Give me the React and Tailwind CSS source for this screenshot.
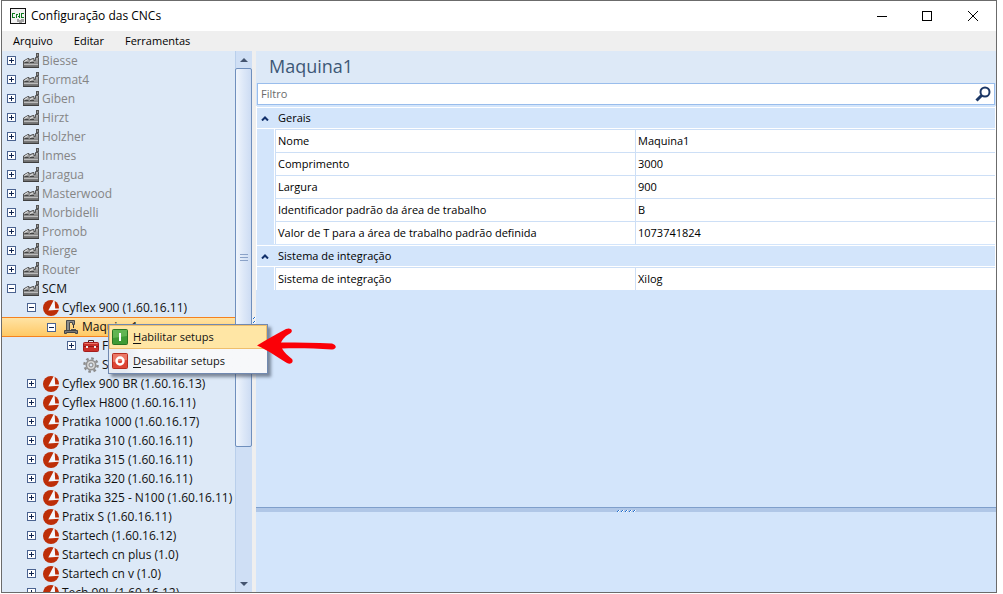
import React, { useState } from 'react';

const factories = ['Biesse', 'Format4', 'Giben', 'Hirzt', 'Holzher', 'Inmes', 'Jaragua', 'Masterwood', 'Morbidelli', 'Promob', 'Rierge', 'Router'];

const scmMachines = [
    'Cyflex 900 BR (1.60.16.13)',
    'Cyflex H800 (1.60.16.11)',
    'Pratika 1000 (1.60.16.17)',
    'Pratika 310 (1.60.16.11)',
    'Pratika 315 (1.60.16.11)',
    'Pratika 320 (1.60.16.11)',
    'Pratika 325 - N100 (1.60.16.11)',
    'Pratix S (1.60.16.11)',
    'Startech (1.60.16.12)',
    'Startech cn plus (1.0)',
    'Startech cn v (1.0)',
    'Tech 99L (1.60.16.12)',
];

const nodes = [
    ...factories.map(label => ({ label, level: 0, icon: 'factory', expander: 'plus', disabled: true })),
    { label: 'SCM', level: 0, icon: 'factory', expander: 'minus' },
    { label: 'Cyflex 900 (1.60.16.11)', level: 1, icon: 'scm', expander: 'minus' },
    { label: 'Maquina1', level: 2, icon: 'machine', expander: 'minus', selected: true },
    { label: 'Ferramentas', level: 3, icon: 'toolbox', expander: 'plus' },
    { label: 'Setups', level: 3, icon: 'gear' },
    ...scmMachines.map(label => ({ label, level: 1, icon: 'scm', expander: 'plus' })),
];

const groups = [
    {
        title: 'Gerais',
        rows: [
            ['Nome', 'Maquina1'],
            ['Comprimento', '3000'],
            ['Largura', '900'],
            ['Identificador padrão da área de trabalho', 'B'],
            ['Valor de T para a área de trabalho padrão definida', '1073741824'],
        ],
    },
    { title: 'Sistema de integração', rows: [['Sistema de integração', 'Xilog']] },
];

const indent = ['pl-[5px]', 'pl-[25px]', 'pl-[45px]', 'pl-[65px]'];

const AppIcon = () => (
    <svg width="16" height="16" viewBox="0 0 16 16" shapeRendering="crispEdges">
        <rect x="0.5" y="0.5" width="15" height="15" fill="#f2f2f2" stroke="#111" />
        <path d="M5 5.5H2.5V9.500H5M6.500 10V5.500M7 6.500H8M8 8.500H9M9.500 10V5M14 5.500H11.500V9.500H14" fill="none" stroke="#0d7a1c" />
        <path d="M7 11h2v1h2v-1h3v3h-2v1h-3v-1h-2z" fill="#a2a2a2" />
    </svg>
);

const FactoryIcon = () => (
    <svg width="16" height="16" viewBox="0 0 16 16">
        <defs>
            <linearGradient id="factory" x1="0" y1="0" x2="0" y2="1">
                <stop offset="0" stopColor="#b5b5b5" />
                <stop offset="1" stopColor="#6a6a6a" />
            </linearGradient>
        </defs>
        <path d="M0.5 14.5V8L5 5.5H6V7L10 5.5H11V7.5H12.5V4.5H15.5V14.5Z" fill="url(#factory)" stroke="#555" />
        <rect x="13.5" y="0.5" width="2" height="3" fill="#999" stroke="#555" />
        <path d="M1.500 9.500H5.500M7 9.500H11" stroke="#444" />
        <path d="M1.500 8.500L5 6.500M7 8.500L10 7" stroke="#e6e6e6" />
        <path d="M1 11.5H15" stroke="#bcbcbc" />
        <path d="M0 14.5H16" stroke="#3f3f3f" />
    </svg>
);

const ScmIcon = () => (
    <svg width="16" height="16" viewBox="0 0 16 16">
        <circle cx="8" cy="8" r="8" fill="#bd2e08" />
        <path d="M10.800 0L5.300 10.600L16 9.800V8.400L12.200 8.600L11.600 0Z" fill="#f4f7fc" />
    </svg>
);

const MachineIcon = () => (
    <svg width="16" height="16" viewBox="0 0 16 16">
        <path d="M3.500 1.500H11.500V5.500H9.500V3.500H6.500V11.500H3.500Z" fill="#8d8d8d" stroke="#4a4a4a" />
        <path d="M10.500 6V9" stroke="#333" />
        <path d="M1.500 14.500V11.500H14.500V14.500H12.500V13.500H3.500V14.500Z" fill="#777" stroke="#444" />
        <path d="M8 10.500H13" stroke="#555" />
    </svg>
);

const ToolboxIcon = () => (
    <svg width="16" height="16" viewBox="0 0 16 16">
        <path d="M5.5 5V2.5H10.5V5" fill="none" stroke="#4a2020" />
        <rect x="0.5" y="4.5" width="15" height="9" rx="1" fill="#c9302a" stroke="#a51d1d" />
        <path d="M1.5 5.5H14.5" stroke="#ea7468" />
        <path d="M1 8.5H15" stroke="#8c1717" />
        <rect x="3" y="8" width="2" height="2" fill="#eee" />
        <rect x="11" y="8" width="2" height="2" fill="#eee" />
    </svg>
);

const GearIcon = () => (
    <svg width="16" height="16" viewBox="0 0 16 16" fill="none">
        <circle cx="8" cy="8" r="6.6" stroke="#8c8c8c" strokeWidth="2.4" strokeDasharray="2.6 2.58" />
        <circle cx="8" cy="8" r="4.7" fill="#d6d6d6" stroke="#929292" strokeWidth="1.6" />
        <circle cx="8" cy="8" r="2" fill="#dde9f7" stroke="#858585" />
    </svg>
);

const icons = { factory: FactoryIcon, scm: ScmIcon, machine: MachineIcon, toolbox: ToolboxIcon, gear: GearIcon };

const Expander = ({ open, label }) => (
    <button aria-label={open ? `Recolher ${label}` : `Expandir ${label}`} className="block w-[9px] h-[9px]">
        <svg width="9" height="9" viewBox="0 0 9 9" shapeRendering="crispEdges">
            <rect x="0.5" y="0.5" width="8" height="8" fill="#fff" stroke="#4b6390" />
            <path d={open ? 'M2 4.5H7' : 'M2 4.5H7M4.5 2V7'} stroke="#10244f" />
        </svg>
    </button>
);

const TreeNode = ({ node }) => {
    const Icon = icons[node.icon];
    return (
        <li className={`flex items-center h-[19px] shrink-0 whitespace-nowrap ${indent[node.level]} ${node.selected ? 'bg-linear-to-b from-[#ffe3a3] to-[#ffc964] border-t border-[#f5821f] shadow-[0_1px_0_#f5821f]' : ''} ${node.disabled ? 'text-[#858585]' : 'text-[#111]'}`}>
            <span className="w-4 shrink-0">
                {node.expander && <Expander open={node.expander === 'minus'} label={node.label} />}
            </span>
            <Icon />
            <span className="pl-[3px]">{node.label}</span>
        </li>
    );
};

const ScrollBar = () => (
    <div className="w-[17px] shrink-0 flex flex-col bg-[#cfdff5] border-l border-[#b9cfeb]">
        <button aria-label="Rolar para cima" className="h-[17px] flex items-center justify-center">
            <svg width="8" height="4" viewBox="0 0 8 4"><path d="M0 4L4 0L8 4Z" fill="#44546f" /></svg>
        </button>
        <div className="basis-[379px] shrink -ml-px rounded-xs border border-[#6f8fbd] bg-linear-to-r from-[#f0f5fc] via-[#dde8f8] to-[#cddcf3] flex items-center justify-center">
            <span className="w-2 h-[7px] border-y border-[#8aa2c8] flex items-center">
                <span className="w-full h-px bg-[#8aa2c8]" />
            </span>
        </div>
        <div className="flex-1" />
        <button aria-label="Rolar para baixo" className="h-[17px] flex items-center justify-center">
            <svg width="8" height="4" viewBox="0 0 8 4"><path d="M0 0H8L4 4Z" fill="#44546f" /></svg>
        </button>
    </div>
);

const Grip = ({ vertical }) => (
    <svg
        width={vertical ? 3 : 19}
        height={vertical ? 11 : 3}
        viewBox={vertical ? '0 0 3 11' : '0 0 19 3'}
        shapeRendering="crispEdges"
    >
        {(vertical ? [0, 1, 2] : [0, 1, 2, 3, 4]).map(i => (
            <g key={i} transform={vertical ? `translate(0 ${i * 4})` : `translate(${i * 4} 0)`}>
                <path d="M0 2h1v1H0zM1 1h1v1H1z" fill="#1f6fd0" />
                <path d="M1 2h1v1H1zM2 1h1v1H2z" fill="#fff" />
            </g>
        ))}
    </svg>
);

const ContextMenu = () => (
    <div role="menu" className="absolute left-[106px] top-[273px] w-[160px] h-[50px] border border-[#7189b0] bg-linear-to-r from-[#e6ebf2] from-10% to-[#f7f8fa] to-20% shadow-[3px_3px_3px_rgba(60,70,90,0.6)] text-[11px] text-[#111]">
        <button role="menuitem" className="w-full h-6 flex items-center pl-[2px] border border-[#efbf6c] bg-[#ffe6a5]">
            <svg width="16" height="16" viewBox="0 0 16 16">
                <rect x="0.5" y="0.5" width="15" height="15" rx="1" fill="#3f9b35" stroke="#2a7422" />
                <path d="M1 1H15V7L1 9Z" fill="#62b552" />
                <rect x="7" y="4" width="2" height="8" fill="#fff" />
            </svg>
            <span className="pl-[5px]"><u className="underline-offset-2">H</u>abilitar setups</span>
        </button>
        <button role="menuitem" className="w-full h-6 flex items-center pl-[3px]">
            <svg width="16" height="16" viewBox="0 0 16 16">
                <rect x="0.5" y="0.5" width="15" height="15" rx="1" fill="#dd4434" stroke="#b52c20" />
                <path d="M1 1H15V7L1 9Z" fill="#ec7867" />
                <circle cx="8" cy="8" r="3.5" fill="none" stroke="#fff" strokeWidth="2.4" />
            </svg>
            <span className="pl-[5px]"><u className="underline-offset-2">D</u>esabilitar setups</span>
        </button>
    </div>
);

const Arrow = () => (
    <svg className="absolute left-[255px] top-[276px]" width="80" height="38" viewBox="0 0 80 38">
        <path d="M0 18.5C10 12 20 7 29 2C34 0 37 4 33 6.500C28 9 26 12 24 15.500C42 15.500 59 15.500 75 16.500C80 18 80 22 75 22.500C58 21.500 42 21 25 21.500C27 25 31 29 35 32C37 35 34 38 30 36C20 30 12 24 0 18.500Z" fill="#fb0007" />
    </svg>
);

const PropertyGroup = ({ group }) => {
    const [open, setOpen] = useState(true);
    return (
        <tbody>
            <tr className="h-[23px]">
                <th colSpan={3} className="p-0 font-normal text-left border-t border-[#d3e5fb]">
                    <button onClick={() => setOpen(!open)} className="w-full h-[22px] flex items-center border-y border-white">
                        <span className="w-[21px] pl-1">
                            <svg className={open ? '' : 'rotate-180'} width="8" height="5" viewBox="0 0 8 5">
                                <path d="M1 4.500L4 1.500L7 4.500" fill="none" stroke="#12306b" strokeWidth="2" />
                            </svg>
                        </span>
                        {group.title}
                    </button>
                </th>
            </tr>
            {open && group.rows.map(([name, value]) => (
                <tr key={name} className="h-[23px]">
                    <td className="p-0 border-r border-white" />
                    <th scope="row" className="py-0 pl-[2px] font-normal text-left bg-white border-t border-l border-[#cddff6]">{name}</th>
                    <td className="py-0 pl-[2px] bg-white border-t border-l border-[#cddff6]">{value}</td>
                </tr>
            ))}
        </tbody>
    );
};

const App = () => {
    const [filter, setFilter] = useState('');

    return (
        <div className="h-screen pl-px pr-1.5 pb-px bg-white font-['Open_Sans',sans-serif] text-[12px] leading-4 text-black">
            <div className="h-full flex flex-col overflow-hidden border border-[#6b6b6b] bg-[#efefef]">
                <header className="h-[30px] shrink-0 flex items-center bg-white pl-2">
                    <AppIcon />
                    <h1 className="pl-[5px] flex-1 text-[12px]">Configuração das CNCs</h1>
                    <button aria-label="Minimizar" className="w-[45px] flex justify-center">
                        <svg width="10" height="10" viewBox="0 0 10 10"><path d="M0 5.500H10" stroke="#000" /></svg>
                    </button>
                    <button aria-label="Maximizar" className="w-[45px] flex justify-center">
                        <svg width="10" height="10" viewBox="0 0 10 10"><rect x="0.5" y="0.5" width="9" height="9" fill="none" stroke="#000" /></svg>
                    </button>
                    <button aria-label="Fechar" className="w-[47px] flex justify-center">
                        <svg width="10" height="10" viewBox="0 0 10 10"><path d="M0 0L10 10M10 0L0 10" stroke="#000" /></svg>
                    </button>
                </header>

                <nav className="h-5 shrink-0 flex items-center gap-[21px] pl-[11px] text-[11px]">
                    <button>Arquivo</button>
                    <button>Editar</button>
                    <button>Ferramentas</button>
                </nav>

                <div className="relative flex-1 min-h-0 flex">
                    <aside className="w-[250px] shrink-0 flex bg-[#dde9f7]">
                        <ul className="flex-1 min-w-0 overflow-hidden">
                            {nodes.map(node => <TreeNode key={node.label} node={node} />)}
                        </ul>
                        <ScrollBar />
                    </aside>
                    <div className="w-1 shrink-0 flex items-center justify-center">
                        <Grip vertical />
                    </div>

                    <main className="flex-1 min-w-0 flex flex-col bg-[#d3e5fb]">
                        <h2 className="h-8 shrink-0 pl-[13px] pb-0.5 flex items-center bg-[#dde9f7] text-[18px] text-[#3d5876]">Maquina1</h2>
                        <div className="mx-px h-[22px] shrink-0 flex items-center bg-white border border-[#99bdec] pl-[3px] pr-[3px]">
                            <input
                                aria-label="Filtro"
                                placeholder="Filtro"
                                value={filter}
                                onChange={(e) => setFilter(e.target.value)}
                                className="flex-1 min-w-0 text-[11px] outline-none placeholder:text-[#6b6b6b]"
                            />
                            <button aria-label="Pesquisar">
                                <svg width="16" height="16" viewBox="0 0 16 16" fill="none" stroke="#1c3766">
                                    <circle cx="10" cy="6" r="4.500" strokeWidth="2" />
                                    <path d="M6.500 9.500L1.500 14.500" strokeWidth="3" />
                                </svg>
                            </button>
                        </div>
                        <div className="flex-1 min-h-0 pt-px">
                            <table className="w-full table-fixed border-separate border-spacing-0 border-x border-white text-[11px]">
                                <colgroup>
                                    <col className="w-[18px]" />
                                    <col />
                                    <col />
                                </colgroup>
                                {groups.map(group => <PropertyGroup key={group.title} group={group} />)}
                            </table>
                        </div>
                        <div className="h-[5px] shrink-0 flex items-center justify-center bg-[#b0c7e7] border-t border-[#7f9fcb]">
                            <Grip />
                        </div>
                        <div className="h-20 shrink-0" />
                    </main>

                    <ContextMenu />
                    <Arrow />
                </div>
            </div>
        </div>
    );
};

export default App;
